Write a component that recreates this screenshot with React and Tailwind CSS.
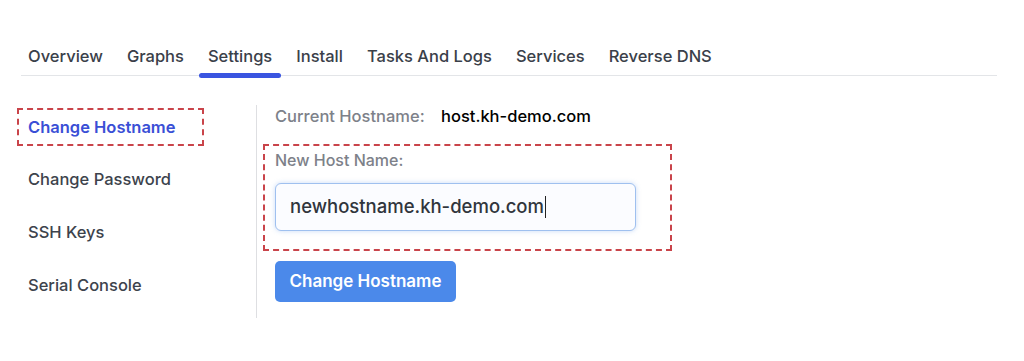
import React from "react";

const tabs = ["Overview", "Graphs", "Settings", "Install", "Tasks And Logs", "Services", "Reverse DNS"];
const sideItems = ["Change Hostname", "Change Password", "SSH Keys", "Serial Console"];

const App = () => {
  return (
    <div
      className="w-[1024px] h-[361px] bg-white overflow-hidden"
      style={{ fontFamily: "Inter, 'Noto Sans', sans-serif" }}
    >
      <div className="pt-[42px] pl-[21px] pr-[27px]">
        {/* tabs */}
        <div className="flex border-b border-[#e3e5e8] h-[34px]">
          {tabs.map((tab) => (
            <div
              key={tab}
              className="relative px-[7px] mr-[10px] text-[16.5px] font-medium text-[#3a4049] leading-[28px]"
            >
              {tab}
              {tab === "Settings" && (
                <span className="absolute left-[-2px] right-[-2px] bottom-[-3px] h-[5px] rounded-full bg-[#3a55e0]" />
              )}
            </div>
          ))}
        </div>

        <div className="flex mt-[32px]">
          {/* sidebar */}
          <div className="w-[235px] flex flex-col">
            {sideItems.map((item, i) =>
              i === 0 ? (
                <div
                  key={item}
                  className="w-[187px] h-[38px] -ml-[4px] border-2 border-dashed border-[#c9444a] flex items-center pl-[9px] text-[16.5px] font-semibold text-[#3a4fd6] mb-[14px]"
                >
                  {item}
                </div>
              ) : (
                <div
                  key={item}
                  className="h-[39px] flex items-center pl-[7px] text-[16.5px] font-medium text-[#3d434c] mb-[14px]"
                >
                  {item}
                </div>
              )
            )}
          </div>

          {/* content */}
          <div className="border-l border-[#dedfe2] h-[213px] -mt-[3px] pl-[6px]">
            <div className="flex items-center h-[22px] pl-[12px] text-[16.5px]">
              <span className="text-[#7d8189] font-medium w-[166px]">Current Hostname:</span>
              <span className="text-black font-medium">host.kh-demo.com</span>
            </div>
            <div className="mt-[17px] w-[409px] border-2 border-dashed border-[#c9444a] pt-[2px] pb-[18px] pl-[10px]">
              <div className="text-[16px] font-medium text-[#7d8189] leading-[24px]">New Host Name:</div>
              <div className="mt-[11px] w-[361px] h-[48px] rounded-[6px] border border-[#9fc0ef] bg-[#fbfcff] shadow-[0_0_5px_rgba(96,150,230,0.35)] flex items-center pl-[14px]">
                <span className="text-[18.5px] font-medium text-[#30353c]">newhostname.kh-demo.com</span>
                <span className="ml-[1px] w-[1.5px] h-[22px] bg-[#222]" />
              </div>
            </div>
            <button className="mt-[10px] ml-[12px] w-[181px] h-[41px] rounded-[5px] bg-[#4b89ea] text-white text-[17px] font-semibold">
              Change Hostname
            </button>
          </div>
        </div>
      </div>
    </div>
  );
};

export default App;
